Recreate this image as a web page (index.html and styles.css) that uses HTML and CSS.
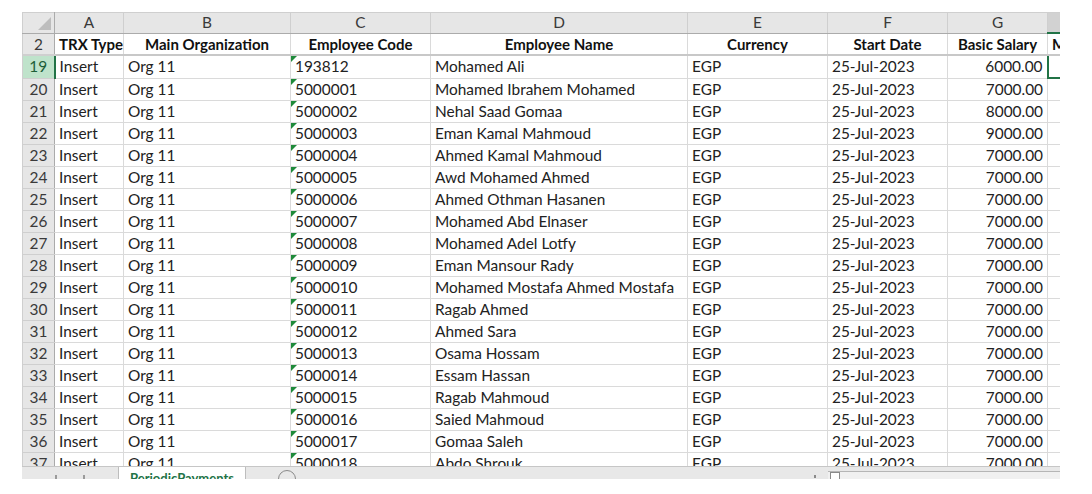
FILE: index.html
```html
<!DOCTYPE html>
<html lang="en">
  <head>
    <meta charset="UTF-8" />
    <meta name="viewport" content="width=device-width, initial-scale=1.0" />
    <title>PeriodicPayments</title>
    <link rel="stylesheet" href="styles.css">
  </head>
  <body>
    <div class="workbook">
      <div class="sheet">
        <table class="grid">
          <colgroup>
            <col class="w-rh" />
            <col class="w-a" />
            <col class="w-b" />
            <col class="w-c" />
            <col class="w-d" />
            <col class="w-e" />
            <col class="w-f" />
            <col class="w-g" />
            <col class="w-h" />
          </colgroup>
          <thead>
            <tr class="letters">
              <th class="corner"><span class="corner-mark"></span></th>
              <th>A</th>
              <th>B</th>
              <th>C</th>
              <th>D</th>
              <th>E</th>
              <th>F</th>
              <th>G</th>
              <th class="col-active"></th>
            </tr>
          </thead>
          <tbody>
            <tr class="titles">
              <td class="rh">2</td>
              <td class="left">TRX Type</td>
              <td>Main Organization</td>
              <td>Employee Code</td>
              <td>Employee Name</td>
              <td>Currency</td>
              <td>Start Date</td>
              <td>Basic Salary</td>
              <td class="left">Monthly</td>
            </tr>
            <tr>
              <td class="rh rh-active">19</td>
              <td>Insert</td><td>Org 11</td><td class="code">193812</td><td>Mohamed Ali</td><td>EGP</td><td>25-Jul-2023</td><td class="num">6000.00</td><td class="cell-active"></td>
            </tr>
            <tr>
              <td class="rh">20</td>
              <td>Insert</td><td>Org 11</td><td class="code">5000001</td><td>Mohamed Ibrahem Mohamed</td><td>EGP</td><td>25-Jul-2023</td><td class="num">7000.00</td><td></td>
            </tr>
            <tr>
              <td class="rh">21</td>
              <td>Insert</td><td>Org 11</td><td class="code">5000002</td><td>Nehal Saad Gomaa</td><td>EGP</td><td>25-Jul-2023</td><td class="num">8000.00</td><td></td>
            </tr>
            <tr>
              <td class="rh">22</td>
              <td>Insert</td><td>Org 11</td><td class="code">5000003</td><td>Eman Kamal Mahmoud</td><td>EGP</td><td>25-Jul-2023</td><td class="num">9000.00</td><td></td>
            </tr>
            <tr>
              <td class="rh">23</td>
              <td>Insert</td><td>Org 11</td><td class="code">5000004</td><td>Ahmed Kamal Mahmoud</td><td>EGP</td><td>25-Jul-2023</td><td class="num">7000.00</td><td></td>
            </tr>
            <tr>
              <td class="rh">24</td>
              <td>Insert</td><td>Org 11</td><td class="code">5000005</td><td>Awd Mohamed Ahmed</td><td>EGP</td><td>25-Jul-2023</td><td class="num">7000.00</td><td></td>
            </tr>
            <tr>
              <td class="rh">25</td>
              <td>Insert</td><td>Org 11</td><td class="code">5000006</td><td>Ahmed Othman Hasanen</td><td>EGP</td><td>25-Jul-2023</td><td class="num">7000.00</td><td></td>
            </tr>
            <tr>
              <td class="rh">26</td>
              <td>Insert</td><td>Org 11</td><td class="code">5000007</td><td>Mohamed Abd Elnaser</td><td>EGP</td><td>25-Jul-2023</td><td class="num">7000.00</td><td></td>
            </tr>
            <tr>
              <td class="rh">27</td>
              <td>Insert</td><td>Org 11</td><td class="code">5000008</td><td>Mohamed Adel Lotfy</td><td>EGP</td><td>25-Jul-2023</td><td class="num">7000.00</td><td></td>
            </tr>
            <tr>
              <td class="rh">28</td>
              <td>Insert</td><td>Org 11</td><td class="code">5000009</td><td>Eman Mansour Rady</td><td>EGP</td><td>25-Jul-2023</td><td class="num">7000.00</td><td></td>
            </tr>
            <tr>
              <td class="rh">29</td>
              <td>Insert</td><td>Org 11</td><td class="code">5000010</td><td>Mohamed Mostafa Ahmed Mostafa</td><td>EGP</td><td>25-Jul-2023</td><td class="num">7000.00</td><td></td>
            </tr>
            <tr>
              <td class="rh">30</td>
              <td>Insert</td><td>Org 11</td><td class="code">5000011</td><td>Ragab Ahmed</td><td>EGP</td><td>25-Jul-2023</td><td class="num">7000.00</td><td></td>
            </tr>
            <tr>
              <td class="rh">31</td>
              <td>Insert</td><td>Org 11</td><td class="code">5000012</td><td>Ahmed Sara</td><td>EGP</td><td>25-Jul-2023</td><td class="num">7000.00</td><td></td>
            </tr>
            <tr>
              <td class="rh">32</td>
              <td>Insert</td><td>Org 11</td><td class="code">5000013</td><td>Osama Hossam</td><td>EGP</td><td>25-Jul-2023</td><td class="num">7000.00</td><td></td>
            </tr>
            <tr>
              <td class="rh">33</td>
              <td>Insert</td><td>Org 11</td><td class="code">5000014</td><td>Essam Hassan</td><td>EGP</td><td>25-Jul-2023</td><td class="num">7000.00</td><td></td>
            </tr>
            <tr>
              <td class="rh">34</td>
              <td>Insert</td><td>Org 11</td><td class="code">5000015</td><td>Ragab Mahmoud</td><td>EGP</td><td>25-Jul-2023</td><td class="num">7000.00</td><td></td>
            </tr>
            <tr>
              <td class="rh">35</td>
              <td>Insert</td><td>Org 11</td><td class="code">5000016</td><td>Saied Mahmoud</td><td>EGP</td><td>25-Jul-2023</td><td class="num">7000.00</td><td></td>
            </tr>
            <tr>
              <td class="rh">36</td>
              <td>Insert</td><td>Org 11</td><td class="code">5000017</td><td>Gomaa Saleh</td><td>EGP</td><td>25-Jul-2023</td><td class="num">7000.00</td><td></td>
            </tr>
            <tr>
              <td class="rh">37</td>
              <td>Insert</td><td>Org 11</td><td class="code">5000018</td><td>Abdo Shrouk</td><td>EGP</td><td>25-Jul-2023</td><td class="num">7000.00</td><td></td>
            </tr>
          </tbody>
        </table>
      </div>
      <!-- sheet tabs strip, cropped at the bottom -->
      <div class="tabs">
        <div class="tab-nav"><span class="dot"></span><span class="dot"></span></div>
        <div class="tab active">PeriodicPayments</div>
        <div class="tab-rest">
          <span class="add-sheet"></span>
          <span class="splitter"></span>
          <span class="hscroll"><span class="thumb"></span></span>
        </div>
      </div>
    </div>
  </body>
</html>
```

FILE: styles.css
```css
body {
  margin: 0;
  background: #fff;
  font-family: Lato, "Open Sans", "Liberation Sans", sans-serif;
  font-size: 15.4px;
  color: #222;
}

.workbook {
  padding: 12px 0 0 22px;
  width: 1038px;
}

.sheet {
  height: 454px;
  overflow: hidden;
}

/* grid */
.grid {
  border-collapse: collapse;
  table-layout: fixed;
  width: 1098px;
}
.w-rh { width: 32px; }
.w-a { width: 69px; }
.w-b { width: 167px; }
.w-c { width: 140px; }
.w-d { width: 257px; }
.w-e { width: 140px; }
.w-f { width: 120px; }
.w-g { width: 100px; }
.w-h { width: 73px; }

.grid th,
.grid td {
  border: 1px solid #dadada;
  padding: 0 4px;
  white-space: nowrap;
  overflow: hidden;
  height: 21px;
  line-height: 21px;
  text-align: left;
}

.letters th {
  background: #e6e6e6;
  border-color: #cfcfcf;
  border-bottom: 1px solid #ababab;
  font-weight: normal;
  text-align: center;
  color: #3a3a3a;
  height: 19px;
  line-height: 19px;
}
.letters th.corner {
  position: relative;
  border-right: 1px solid #ababab;
}
.corner-mark {
  position: absolute;
  right: 3px;
  bottom: 3px;
  width: 0;
  height: 0;
  border-left: 13px solid transparent;
  border-bottom: 13px solid #bdbdbd;
}
.letters th.col-active {
  background: #d2d2d2;
  border-bottom: 2px solid #217346;
}

.titles td {
  font-weight: bold;
  font-size: 15px;
  text-align: center;
  color: #111;
  height: 20px;
  line-height: 20px;
  border-bottom: 2px solid #c8c8c8;
}
.titles td.left {
  text-align: left;
}

.grid td.rh {
  background: #e6e6e6;
  border-color: #cfcfcf;
  border-right: 1px solid #ababab;
  text-align: center;
  color: #3a3a3a;
  font-weight: normal;
  font-size: 15.4px;
  padding: 0;
}
.grid td.rh-active {
  background: #bfe3cb;
  color: #1d5e38;
  border-right: 2px solid #217346;
}

.grid td.num {
  text-align: right;
}

.grid td.code {
  position: relative;
}
.grid td.code::before {
  content: "";
  position: absolute;
  left: 0;
  top: 0;
  border-top: 6px solid #1e8a3a;
  border-right: 6px solid transparent;
}

.grid td.cell-active {
  border: 2px solid #217346;
}

/* sheet tabs */
.tabs {
  display: flex;
  height: 12px;
  overflow: hidden;
  background: #e8e8e8;
  border-top: 1px solid #c6c6c6;
  font-size: 13px;
}
.tab-nav {
  width: 96px;
  display: flex;
  align-items: flex-end;
  justify-content: center;
  gap: 26px;
}
.dot {
  width: 2px;
  height: 4px;
  background: #9a9a9a;
}
.tab {
  width: 126px;
  text-align: center;
  line-height: 24px;
  margin-top: -1px;
  border-left: 1px solid #bdbdbd;
  border-right: 1px solid #bdbdbd;
}
.tab.active {
  background: #fff;
  color: #217346;
  font-weight: bold;
}
.tab-rest {
  flex: 1;
  min-width: 0;
  display: flex;
  align-items: flex-start;
  padding-left: 32px;
}
.add-sheet {
  flex: none;
  width: 16px;
  height: 16px;
  border: 1px solid #8a8a8a;
  border-radius: 50%;
  margin-top: 3px;
}
.splitter {
  flex: none;
  width: 2px;
  height: 3px;
  background: #8a8a8a;
  margin: 8px 0 0 518px;
}
.hscroll {
  flex: 1;
  min-width: 0;
  height: 14px;
  margin: 4px 0 0 12px;
  border-top: 1px solid #b5b5b5;
  background: #f0f0f0;
}
.thumb {
  display: block;
  width: 8px;
  height: 14px;
  margin-left: 2px;
  border: 1px solid #8a8a8a;
  background: #fff;
}
```
